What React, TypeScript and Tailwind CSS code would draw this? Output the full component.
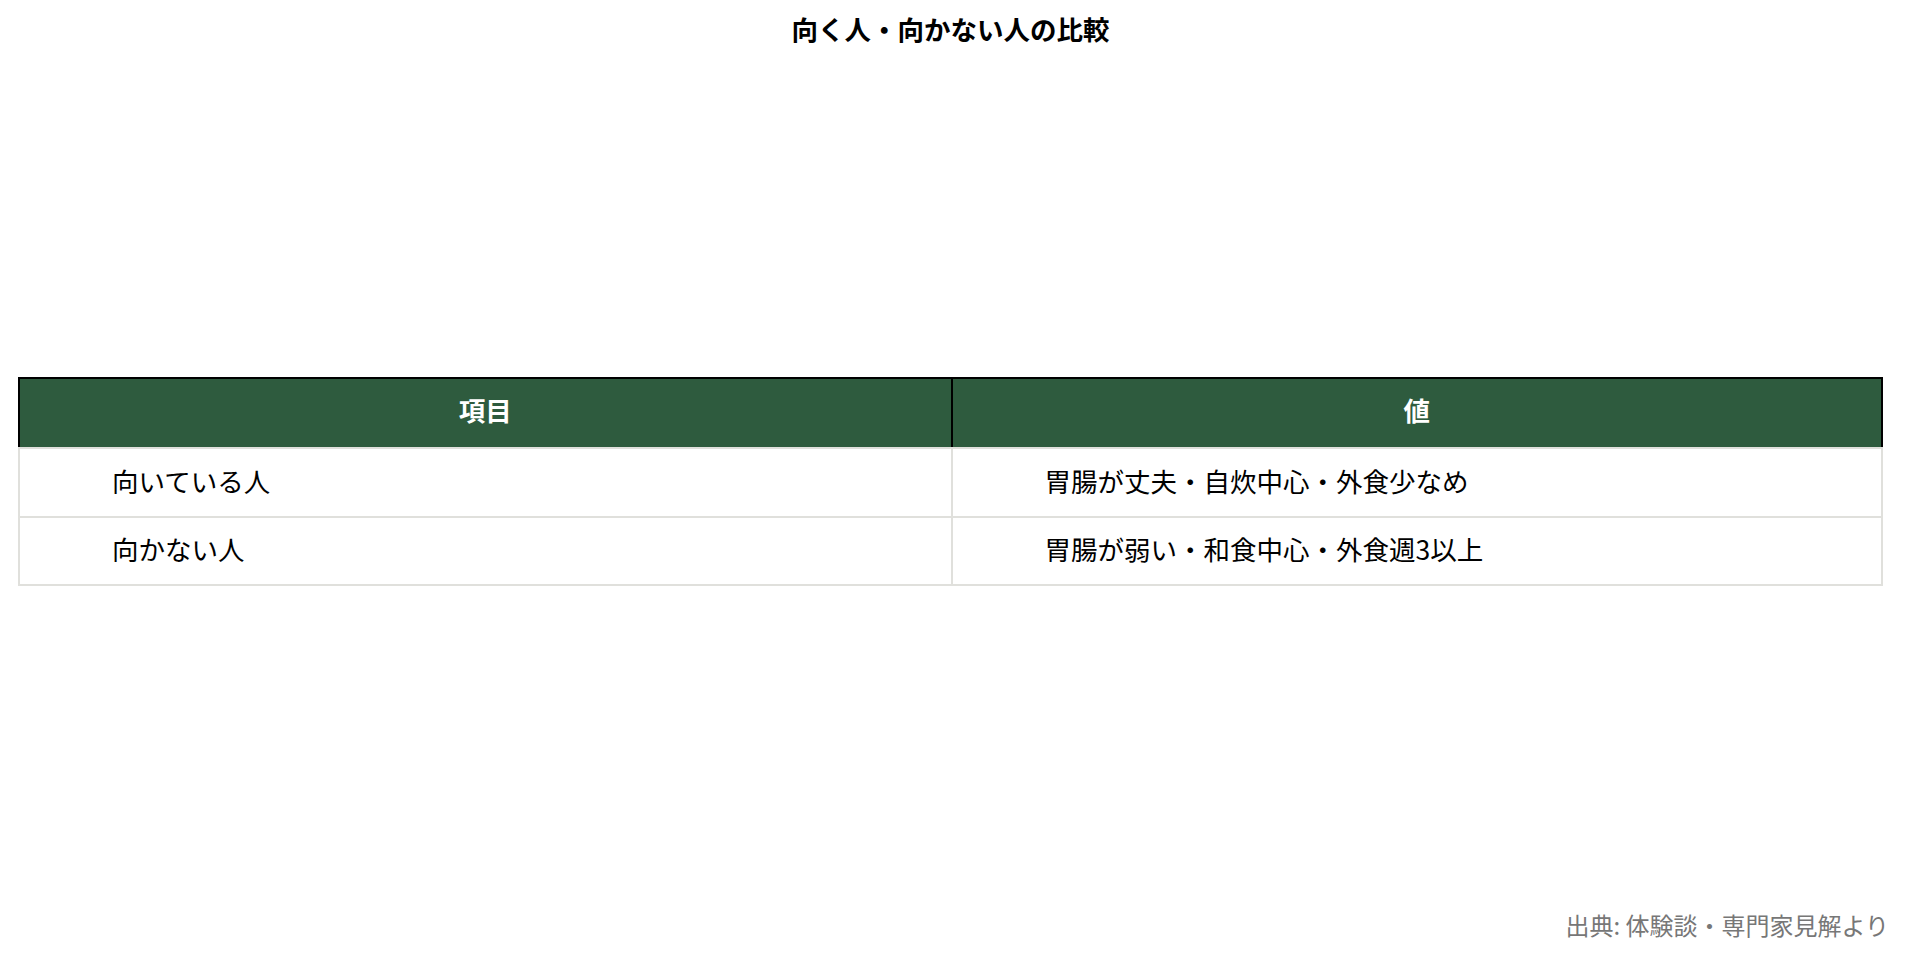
const rows = [
  { label: '向いている人', value: '胃腸が丈夫・自炊中心・外食少なめ' },
  { label: '向かない人', value: '胃腸が弱い・和食中心・外食週3以上' },
];

export default function App() {
  return (
    <div
      className="h-screen w-full bg-white text-black flex flex-col"
      style={{ fontFamily: '"Noto Sans CJK JP", "Noto Sans", sans-serif' }}
    >
      <div className="ml-[18px] w-[1865px] flex flex-col">
        {/* Title */}
        <h1 className="pt-[11px] text-center text-[26.5px] leading-[36px] font-bold">
          向く人・向かない人の比較
        </h1>

        {/* Table */}
        <table className="mt-[330px] w-full table-fixed border-separate border-spacing-0 text-[26.5px]">
          <thead>
            <tr className="bg-[#2e5b3e] text-white">
              <th className="h-[70px] p-0 pb-[6px] border-t-2 border-l-2 border-black font-bold text-center">項目</th>
              <th className="h-[70px] p-0 pb-[6px] border-t-2 border-l-2 border-r-2 border-black font-bold text-center">値</th>
            </tr>
          </thead>
          <tbody>
            {rows.map((r, i) => (
              <tr key={i}>
                <td
                  className={`p-0 pb-[4px] border-t-2 border-l-2 border-[#e0e0dc] pl-[92px] text-left ${
                    i === rows.length - 1 ? 'border-b-2 h-[70px]' : 'h-[69px]'
                  }`}
                >
                  {r.label}
                </td>
                <td
                  className={`p-0 pb-[4px] border-t-2 border-l-2 border-r-2 border-[#e0e0dc] pl-[92px] text-left ${
                    i === rows.length - 1 ? 'border-b-2 h-[70px]' : 'h-[69px]'
                  }`}
                >
                  {r.value}
                </td>
              </tr>
            ))}
          </tbody>
        </table>
      </div>

      {/* Source */}
      <div className="mt-auto mb-[18px] pr-[21px] text-right text-[24px] leading-[32px] text-[#777777]">
        出典: 体験談・専門家見解より
      </div>
    </div>
  );
}
